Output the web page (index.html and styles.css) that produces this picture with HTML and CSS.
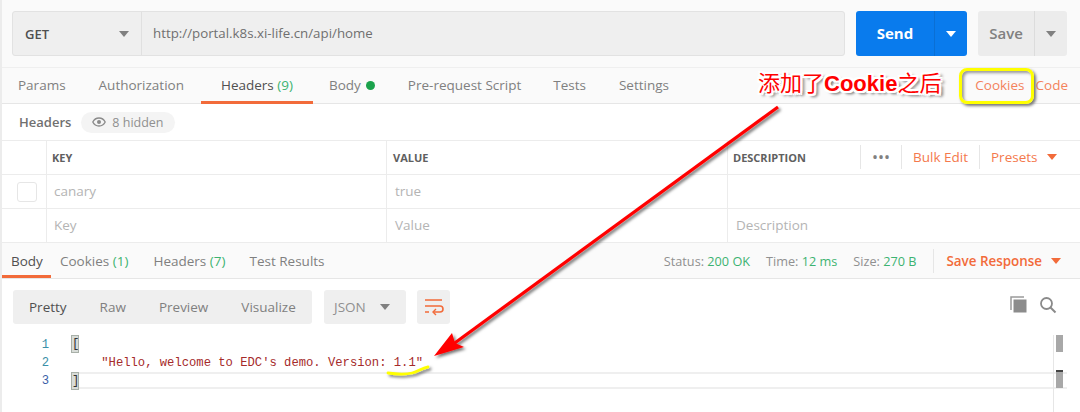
FILE: index.html
```html
<!DOCTYPE html>
<html lang="en">
<head>
<meta charset="utf-8">
<title>Postman</title>
<link rel="stylesheet" href="styles.css">
</head>
<body>
<div class="app">
  <div class="urlbar">
    <div class="urlfield">
      <div class="method"><span>GET</span><i class="caret"></i></div>
      <div class="url">http://portal.k8s.xi-life.cn/api/home</div>
    </div>
    <div class="send"><span class="send-label">Send</span><span class="send-drop"><i class="caret caret-white"></i></span></div>
    <div class="save"><span class="save-label">Save</span><span class="save-drop"><i class="caret"></i></span></div>
  </div>
  <div class="reqtabs">
    <span class="tab tab-params">Params</span>
    <span class="tab tab-auth">Authorization</span>
    <span class="tab tab-headers">Headers <em class="count">(9)</em></span>
    <span class="tab tab-body">Body <b class="dot"></b></span>
    <span class="tab tab-pre">Pre-request Script</span>
    <span class="tab tab-tests">Tests</span>
    <span class="tab tab-settings">Settings</span>
    <span class="tab-links"><span class="link">Cookies</span><span class="link">Code</span></span>
  </div>
  <div class="subhead">
    <span class="subhead-title">Headers</span>
    <span class="pill">
      <svg class="eye" viewBox="0 0 14 10" width="14" height="10"><path d="M7 1C4 1 1.8 3 .8 5c1 2 3.2 4 6.2 4s5.200-2 6.200-4C12.200 3 10 1 7 1z" fill="none" stroke="#8a8a8a" stroke-width="1.300"/><circle cx="7" cy="5" r="2" fill="#8a8a8a"/></svg>
      8 hidden
    </span>
  </div>
  <div class="row row-head">
    <div class="cell cell-check"></div>
    <div class="cell cell-key">KEY</div>
    <div class="cell cell-val">VALUE</div>
    <div class="cell cell-desc">DESCRIPTION
      <div class="head-actions">
        <span class="ha ha-dots">•••</span>
        <span class="ha ha-bulk">Bulk Edit</span>
        <span class="ha ha-presets">Presets <i class="caret caret-orange"></i></span>
      </div>
    </div>
  </div>
  <div class="row">
    <div class="cell cell-check"><span class="checkbox"></span></div>
    <div class="cell cell-key muted">canary</div>
    <div class="cell cell-val muted">true</div>
    <div class="cell cell-desc"></div>
  </div>
  <div class="row">
    <div class="cell cell-check"></div>
    <div class="cell cell-key muted">Key</div>
    <div class="cell cell-val muted">Value</div>
    <div class="cell cell-desc muted">Description</div>
  </div>
  <div class="restabs">
    <span class="rtab rtab-active">Body</span>
    <span class="rtab">Cookies <em class="count">(1)</em></span>
    <span class="rtab">Headers <em class="count">(7)</em></span>
    <span class="rtab">Test Results</span>
    <div class="status">
      <span>Status: <em class="count">200 OK</em></span>
      <span>Time: <em class="count">12 ms</em></span>
      <span>Size: <em class="count">270 B</em></span>
      <span class="saveresp">Save Response <i class="caret caret-orange"></i></span>
    </div>
  </div>
  <div class="toolbar">
    <div class="views">
      <span class="view view-active">Pretty</span>
      <span class="view">Raw</span>
      <span class="view">Preview</span>
      <span class="view">Visualize</span>
    </div>
    <div class="lang"><span>JSON</span><i class="caret"></i></div>
    <div class="wrap">
      <svg viewBox="0 0 20 18" width="20" height="18"><path d="M1 2h17M1 8h15c4 0 4 6 0 6h-6M1 14h4" fill="none" stroke="#f26b3a" stroke-width="1.600"/><path d="M12 11l-3 3 3 3" fill="none" stroke="#f26b3a" stroke-width="1.400"/></svg>
    </div>
    <div class="tools">
      <svg viewBox="0 0 18 18" width="18" height="18"><path d="M1 14V1h13" fill="none" stroke="#9a9a9a" stroke-width="1.500"/><rect x="3.500" y="3.500" width="13" height="13" fill="#8c8c8c"/></svg>
      <svg viewBox="0 0 18 18" width="18" height="18"><circle cx="7.500" cy="7.500" r="5.500" fill="none" stroke="#8a8a8a" stroke-width="1.800"/><path d="M11.500 11.500l5 5" stroke="#8a8a8a" stroke-width="2"/></svg>
    </div>
  </div>
  <div class="code">
    <div class="gutter"><span class="n1">1</span><span class="n2">2</span><span class="n3">3</span></div>
    <div class="lines">
      <div class="line"><span class="bracket">[</span></div>
      <div class="line str">    "Hello, welcome to EDC's demo. Version: 1.1"</div>
      <div class="line line-cur"><span class="bracket">]</span></div>
    </div>
    <div class="minimap"><b class="thumb thumb-a"></b><b class="thumb thumb-b"></b></div>
  </div>
</div>
<div class="note">添加了<b>Cookie</b>之后</div>
<div class="ring"></div>
<svg class="ink" viewBox="0 0 1080 412" width="1080" height="412">
  <defs><filter id="sh" x="-10%" y="-10%" width="120%" height="120%"><feDropShadow dx="2" dy="2" stdDeviation="1.500" flood-color="#000" flood-opacity=".55"/></filter></defs>
  <g filter="url(#sh)">
    <path d="M778 107L452 345" stroke="#f00" stroke-width="3.200" fill="none"/>
    <path d="M434 356L452 333 L455 343 L464 347z" fill="#f00"/>
    <path d="M388 373c7 1 16 2 24 0c5-1 10-5 16-6" fill="none" stroke="#ff0" stroke-width="2.800" stroke-linecap="round"/>
  </g>
</svg>
</body>
</html>
```
FILE: styles.css
```css
* { box-sizing: border-box; }
html, body { margin: 0; padding: 0; }
body { width: 1080px; height: 412px; overflow: hidden; background: #fff; font-family: "Open Sans", "Noto Sans", sans-serif; font-size: 13px; color: #808080; position: relative; }
em { font-style: normal; }
.app { border-left: 2px solid #ececec; height: 412px; }

.caret { display: inline-block; width: 0; height: 0; border-left: 5px solid transparent; border-right: 5px solid transparent; border-top: 6px solid #808080; }
.caret-white { border-top-color: #fff; }
.caret-orange { border-top-color: #f26b3a; }

.urlbar { height: 68px; background: #fafafa; border-bottom: 1px solid #efefef; padding: 11px 13px 0 10px; display: flex; align-items: flex-start; }
.urlfield { width: 833px; height: 45px; display: flex; background: #efefef; border: 1px solid #e2e2e2; border-radius: 3px; }
.method { width: 129px; border-right: 1px solid #e0e0e0; display: flex; align-items: center; justify-content: space-between; padding: 0 12px 0 12px; font-weight: 600; color: #505050; font-size: 13px; }
.url { flex: 1; padding-left: 11px; line-height: 42px; font-size: 13.300px; color: #707070; }
.send { margin-left: 11px; width: 111px; height: 45px; display: flex; background: #097bed; border-radius: 3px; color: #fff; font-weight: 700; font-size: 15px; }
.send-label { width: 78px; text-align: center; line-height: 44px; }
.send-drop { flex: 1; border-left: 1px solid #0a6fd4; display: flex; align-items: center; justify-content: center; }
.save { margin-left: 11px; width: 89px; height: 45px; display: flex; background: #ececec; border-radius: 3px; color: #808080; font-weight: 600; font-size: 15px; }
.save-label { width: 56px; text-align: center; line-height: 44px; }
.save-drop { flex: 1; border-left: 1px solid #dcdcdc; display: flex; align-items: center; justify-content: center; }

.reqtabs { height: 36px; background: #fafafa; border-bottom: 1px solid #e6e6e6; display: flex; font-size: 13.500px; position: relative; }
.tab { line-height: 34px; color: #808080; }
.tab-params { margin-left: 16px; }
.tab-auth { margin-left: 33px; }
.tab-headers { margin-left: 17px; width: 112px; text-align: center; color: #505050; border-bottom: 3px solid #f26b3a; height: 36px; }
.tab-body { margin-left: 16px; display: flex; align-items: center; gap: 5px; height: 34px; }
.tab-pre { margin-left: 33px; }
.tab-tests { margin-left: 32px; }
.tab-settings { margin-left: 33px; }
.count { color: #3cb371; }
.dot { width: 9px; height: 9px; border-radius: 50%; background: #1ba24c; }
.tab-links { margin-left: auto; margin-right: 12px; display: flex; gap: 11px; }
.link { line-height: 34px; color: #f4825c; }

.subhead { height: 36px; display: flex; align-items: center; padding-left: 17px; background: #fff; }
.subhead-title { font-weight: 600; color: #707070; font-size: 13px; }
.pill { margin-left: 10px; height: 21px; padding: 0 11px; border-radius: 11px; background: #f4f4f4; color: #909090; font-size: 12.500px; display: flex; align-items: center; gap: 6px; }

.row { height: 34px; display: flex; border-top: 1px solid #ececec; background: #fff; }
.cell { display: flex; align-items: center; border-right: 1px solid #ececec; padding-left: 7px; padding-bottom: 2px; }
.cell-check { width: 45px; justify-content: center; padding: 0; }
.cell-key { width: 340px; }
.cell-val { width: 341px; padding-left: 8px; }
.cell-desc { flex: 1; border-right: 0; padding-left: 8px; }
.row-head .cell { font-size: 11px; font-weight: 700; color: #606060; padding-left: 5px; padding-bottom: 1px; }
.row-head .cell-val { padding-left: 6px; }
.muted { color: #b4b4b4; font-size: 13.500px; }
.checkbox { width: 20px; height: 20px; border: 1px solid #e6e6e6; border-radius: 3px; margin-left: 6px; }
.head-actions { margin-left: auto; margin-right: 9px; height: 24px; display: flex; align-items: center; font-weight: 400; font-size: 13.500px; color: #f26b3a; }
.ha { height: 24px; line-height: 24px; border-left: 1px solid #e6e6e6; }
.ha-dots { width: 41px; text-align: center; color: #808080; font-size: 16px; }
.ha-bulk { width: 78px; text-align: center; color: #f4794d; }
.ha-presets { width: 92px; padding-left: 11px; color: #f4794d; display: flex; align-items: center; gap: 10px; }

.restabs { height: 37px; background: #fafafa; border-top: 1px solid #ececec; border-bottom: 1px solid #e6e6e6; display: flex; font-size: 13.500px; }
.rtab { line-height: 36px; color: #808080; margin-left: 25px; }
.rtab:nth-child(2) { margin-left: 9px; }
.rtab:nth-child(4) { margin-left: 24px; }
.rtab-active { width: 49px; padding-left: 9px; margin-left: 0; color: #505050; height: 35px; border-bottom: 3px solid #f26b3a; }
.status { margin-left: auto; display: flex; align-items: center; height: 36px; font-size: 12.700px; color: #909090; gap: 16px; padding-right: 19px; }
.saveresp { margin-left: 1px; height: 24px; line-height: 24px; border-left: 1px solid #e6e6e6; padding-left: 12px; color: #f26b3a; font-weight: 600; font-size: 13.400px; display: flex; align-items: center; gap: 9px; }

.toolbar { height: 57px; padding: 11px 0 0 11px; display: flex; align-items: flex-start; }
.views { width: 299px; height: 34px; background: #efefef; border-radius: 3px; display: flex; align-items: center; font-size: 13.500px; color: #808080; }
.view { margin-left: 33px; }
.view:first-child { margin-left: 16px; }
.view-active { color: #505050; }
.lang { margin-left: 12px; width: 82px; height: 34px; background: #efefef; border-radius: 3px; display: flex; align-items: center; justify-content: space-between; padding: 0 16px 0 10px; font-size: 13.500px; color: #909090; }
.wrap { margin-left: 11px; width: 33px; height: 34px; background: #efefef; border-radius: 3px; display: flex; align-items: center; justify-content: center; }
.tools { margin-left: auto; margin-right: 23px; display: flex; gap: 11px; align-items: center; height: 30px; }

.code { display: flex; height: 76px; font-family: "Liberation Mono", monospace; font-size: 12.200px; line-height: 18px; position: relative; }
.gutter { width: 70px; display: flex; flex-direction: column; align-items: flex-end; padding: 0 23px 0 0; }
.n1, .n2 { color: #3b8fa8; }
.n3 { color: #3b5fa8; }
.lines { flex: 1; margin-right: 13px; }
.line { height: 18px; white-space: pre; }
.str { color: #a52a2a; }
.bracket { display: inline-block; background: #d8dcd8; outline: 1px solid #a8b0a8; width: 6px; height: 16px; color: #333; line-height: 16px; vertical-align: top; }
.line-cur { border-top: 2px solid #efefef; border-bottom: 2px solid #efefef; height: 17px; line-height: 13px; }
.line-cur .bracket { margin-top: -1px; }
.minimap { position: absolute; left: 1051px; top: -1px; width: 12px; height: 77px; border-left: 1px solid #e6e6e6; }

.thumb { position: absolute; left: 2px; width: 7px; background: #a8a8a8; }
.thumb-a { top: 0; height: 17px; }
.thumb-b { top: 35px; height: 18px; border-top: 2px solid #444; }

.note { position: absolute; left: 758px; top: 70px; font-family: "Liberation Sans", "Noto Sans CJK SC", sans-serif; font-size: 22px; line-height: 28px; color: #f00; white-space: nowrap; text-shadow: -2px 0 0 #fff, 2px 0 0 #fff, 0 -2px 0 #fff, 0 2px 0 #fff, -2px -2px 0 #fff, 2px 2px 0 #fff, -2px 2px 0 #fff, 2px -2px 0 #fff, 3px 3px 3px #777, 4px 2px 3px #999; }
.ring { position: absolute; left: 959px; top: 68px; width: 75px; height: 36px; border: 3px solid #ffff00; border-radius: 8px; box-shadow: 2px 2px 3px #777, inset 2px 2px 3px #999; }
.ink { position: absolute; left: 0; top: 0; pointer-events: none; }
```
